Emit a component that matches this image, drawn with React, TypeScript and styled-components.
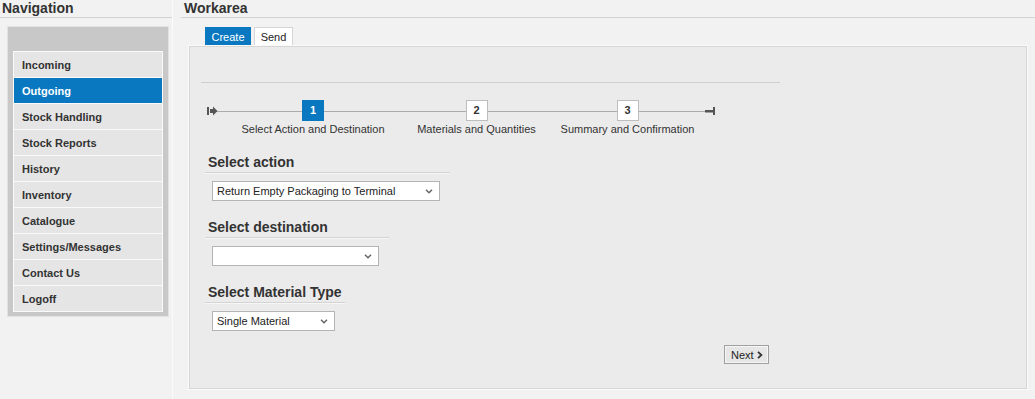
import styled, { createGlobalStyle } from 'styled-components';

const GlobalStyle = createGlobalStyle`
  html, body {
    margin: 0;
    padding: 0;
    background: #f2f2f2;
    font-family: "Liberation Sans", Arial, sans-serif;
    color: #333;
  }
`;

const navItems = [
  'Incoming',
  'Outgoing',
  'Stock Handling',
  'Stock Reports',
  'History',
  'Inventory',
  'Catalogue',
  'Settings/Messages',
  'Contact Us',
  'Logoff',
];

// width = column width, gap = space before the column
const steps = [
  { num: 1, label: 'Select Action and Destination', width: 144, gap: 23 },
  { num: 2, label: 'Materials and Quantities', width: 117, gap: 33 },
  { num: 3, label: 'Summary and Confirmation', width: 131, gap: 27 },
];

const Chevron = () => (
  <svg width="8" height="5" viewBox="0 0 8 5">
    <path d="M1 0.8 L4 3.8 L7 0.8" fill="none" stroke="#666" strokeWidth="1.5" />
  </svg>
);

const SelectBox = ({ value, width }: { value: string; width: number }) => (
  <SelectWrap $width={width}>
    <SelectText>{value}</SelectText>
    <ArrowSlot>
      <Chevron />
    </ArrowSlot>
  </SelectWrap>
);

const App = () => {
  return (
    <>
      <GlobalStyle />
      <Page>
        <NavColumn>
          <Header>Navigation</Header>
          <NavPanel>
            <NavList>
              {navItems.map((item) => (
                <NavItem key={item} $active={item === 'Outgoing'}>
                  {item}
                </NavItem>
              ))}
            </NavList>
          </NavPanel>
        </NavColumn>

        <WorkColumn>
          <Header $indent={3}>Workarea</Header>
          <Tabs>
            <Tab $active $width={46}>Create</Tab>
            <Tab $width={39}>Send</Tab>
          </Tabs>
          <Panel>
            <TopRule />
            <Stepper>
              <StepIcon width="11" height="10" viewBox="0 0 11 10">
                <rect x="0" y="1" width="2" height="8" fill="#555" />
                <path d="M3 3 H6 V0.5 L10.5 5 L6 9.5 V7 H3 Z" fill="#555" />
              </StepIcon>
              {steps.map((s) => (
                <Step key={s.num} $width={s.width} $gap={s.gap}>
                  <StepBox $active={s.num === 1}>{s.num}</StepBox>
                  <StepLabel>{s.label}</StepLabel>
                </Step>
              ))}
              <StepIcon width="11" height="10" viewBox="0 0 11 10" style={{ marginLeft: 12 }}>
                <rect x="0" y="4" width="8" height="2.5" fill="#555" />
                <rect x="8" y="1" width="2" height="8" fill="#555" />
              </StepIcon>
            </Stepper>

            <Group>
              <GroupTitle>Select action</GroupTitle>
              <SelectBox value="Return Empty Packaging to Terminal" width={228} />
            </Group>
            <Group>
              <GroupTitle>Select destination</GroupTitle>
              <SelectBox value="" width={167} />
            </Group>
            <Group>
              <GroupTitle>Select Material Type</GroupTitle>
              <SelectBox value="Single Material" width={123} />
            </Group>

            <Footer>
              <NextButton>
                Next
                <svg width="6" height="8" viewBox="0 0 6 8">
                  <path d="M1 0.8 L4.4 4 L1 7.2" fill="none" stroke="#333" strokeWidth="1.8" />
                </svg>
              </NextButton>
            </Footer>
          </Panel>
        </WorkColumn>
      </Page>
    </>
  );
};

export default App;

const Page = styled.div`
  display: flex;
  width: 1035px;
  min-height: 399px;
`;

const NavColumn = styled.div`
  width: 172px;
  flex-shrink: 0;
  border-right: 1px solid #fafafa;
`;

const WorkColumn = styled.div`
  flex: 1;
  margin-left: 8px;
  display: flex;
  flex-direction: column;
`;

const Header = styled.div<{ $indent?: number }>`
  font-size: 14px;
  font-weight: bold;
  line-height: 17px;
  height: 17px;
  padding-left: ${(p) => p.$indent ?? 2}px;
  border-bottom: 1px solid #d2d2d2;
  color: #333;
`;

const NavPanel = styled.div`
  margin: 8px 0 0 7px;
  width: 150px;
  padding: 24px 5px 4px 5px;
  background: #c8c8c8;
  border: 1px solid #e2e2e2;
`;

const NavList = styled.div`
  border: 1px solid #fafafa;
  background: #fafafa;
`;

const NavItem = styled.div<{ $active?: boolean }>`
  height: 25px;
  line-height: 27px;
  padding-left: 8px;
  margin-bottom: 1px;
  font-size: 11px;
  font-weight: bold;
  background: ${(p) => (p.$active ? '#0a78c0' : '#e5e5e5')};
  color: ${(p) => (p.$active ? '#fff' : '#333')};
  &:last-child {
    margin-bottom: 0;
  }
`;

const Tabs = styled.div`
  display: flex;
  gap: 3px;
  margin: 9px 0 0 24px;
  height: 19px;
`;

const Tab = styled.div<{ $active?: boolean; $width: number }>`
  width: ${(p) => p.$width}px;
  height: 19px;
  line-height: 19px;
  font-size: 11px;
  background: ${(p) => (p.$active ? '#0a78c0' : '#fff')};
  color: ${(p) => (p.$active ? '#fff' : '#222')};
  border: 1px solid ${(p) => (p.$active ? '#0a78c0' : '#d6d6d6')};
  border-bottom: none;
  box-sizing: border-box;
  text-align: center;
`;

const Panel = styled.div`
  margin: 0 8px 0 8px;
  height: 341px;
  padding-left: 11px;
  background: #ebebeb;
  border: 1px solid #d6d6d6;
  box-shadow: 0 0 0 1px #fafafa;
`;

const TopRule = styled.div`
  margin-top: 35px;
  width: 579px;
  border-top: 1px solid #cfcfcf;
`;

const Stepper = styled.div`
  position: relative;
  display: flex;
  align-items: flex-start;
  margin: 17px 0 0 6px;
  width: 509px;

  &::before {
    content: '';
    position: absolute;
    left: 8px;
    right: 6px;
    top: 11px;
    height: 1px;
    background: #ababab;
  }
`;

const StepIcon = styled.svg`
  flex-shrink: 0;
  margin-top: 6px;
  position: relative;
  z-index: 1;
`;

const Step = styled.div<{ $width: number; $gap: number }>`
  display: flex;
  flex-direction: column;
  align-items: center;
  position: relative;
  z-index: 1;
  flex-shrink: 0;
  width: ${(p) => p.$width}px;
  margin-left: ${(p) => p.$gap}px;
`;

const StepBox = styled.div<{ $active?: boolean }>`
  width: 22px;
  height: 21px;
  box-sizing: border-box;
  line-height: 19px;
  text-align: center;
  font-size: 11px;
  font-weight: bold;
  background: ${(p) => (p.$active ? '#0a78c0' : '#fff')};
  color: ${(p) => (p.$active ? '#fff' : '#333')};
  border: 1px solid ${(p) => (p.$active ? '#0a78c0' : '#bdbdbd')};
`;

const StepLabel = styled.div`
  margin-top: 1px;
  font-size: 11px;
  line-height: 14px;
  white-space: nowrap;
  color: #333;
`;

const Group = styled.div`
  display: table;
  margin: 18px 0 0 4px;
  padding-right: 10px;
`;

const GroupTitle = styled.div`
  font-size: 14px;
  font-weight: bold;
  line-height: 17px;
  padding: 0 0 1px 3px;
  border-bottom: 1px solid #d4d4d4;
  box-shadow: 0 1px 0 #f6f6f6;
  color: #333;
  white-space: nowrap;
  margin-right: -10px;
`;

const SelectWrap = styled.div<{ $width: number }>`
  position: relative;
  margin: 8px 0 0 7px;
  width: ${(p) => p.$width}px;
  height: 20px;
  box-sizing: border-box;
  background: #fff;
  border: 1px solid #b4b4b4;
  display: flex;
  align-items: center;
`;

const SelectText = styled.span`
  flex: 1;
  padding-left: 4px;
  font-size: 11px;
  color: #222;
  white-space: nowrap;
`;

const ArrowSlot = styled.span`
  display: flex;
  align-items: center;
  padding: 0 6px 0 4px;
`;

const Footer = styled.div`
  display: flex;
  justify-content: flex-end;
  width: 568px;
  margin-top: 14px;
`;

const NextButton = styled.button`
  display: flex;
  align-items: center;
  gap: 3px;
  height: 19px;
  width: 45px;
  padding: 0 0 0 6px;
  box-sizing: border-box;
  font-family: "Liberation Sans", Arial, sans-serif;
  font-size: 11px;
  color: #222;
  background: #e6e6e6;
  border: 1px solid #a0a0a0;
  box-shadow: inset 0 0 0 1px #f6f6f6;
  cursor: pointer;
`;
